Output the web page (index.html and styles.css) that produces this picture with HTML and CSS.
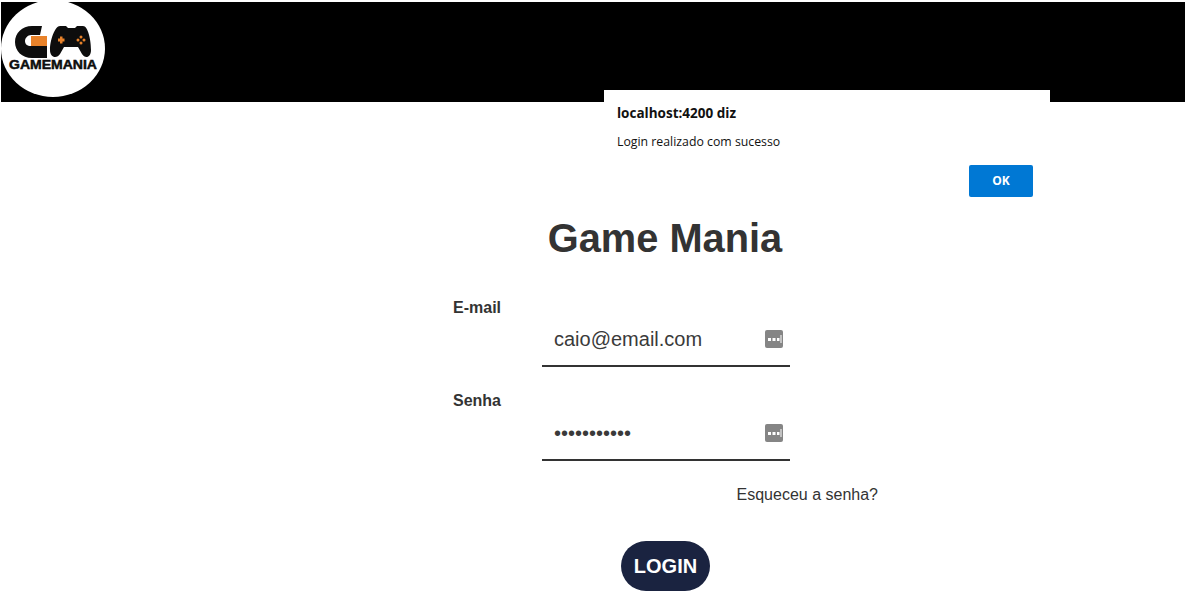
FILE: index.html
```html
<!DOCTYPE html>
<html lang="pt-BR">
<head>
  <meta charset="UTF-8" />
  <title>Game Mania</title>
  <link rel="stylesheet" href="styles.css">
</head>
<body>
  <header class="topo">
    <svg class="logo" viewBox="1 0 104 97" width="104" height="97">
      <ellipse cx="53" cy="48.5" rx="52" ry="48.5" fill="#fff" />
      <path d="M42 26H32C22 26 15 33 15 42C15 51 22 58 32 58H47V46H31C27 46 25 44 25 41C25 38 28 35 31 35H40Z" fill="#0d0d0d" />
      <path d="M31 36H47V46H31Z" fill="#e8822a" />
      <path d="M60 26H66L68 28H75L77 26H83C88 26 91 40 91 50C91 58 85 59 82 54L78 47H64L60 54C57 59 50 58 50 50C50 40 55 26 60 26Z" fill="#0d0d0d" />
      <path d="M58 38.500H60V36.500H62.500V38.500H64.500V41.500H62.500V43.500H60V41.500H58Z" fill="#e8822a" />
      <g fill="#e8822a">
        <circle cx="81" cy="37" r="1.500" />
        <circle cx="81" cy="43" r="1.500" />
        <circle cx="78" cy="40" r="1.500" />
        <circle cx="84" cy="40" r="1.500" />
      </g>
      <text class="logo-texto" x="9" y="69" textLength="88" lengthAdjust="spacingAndGlyphs">GAMEMANIA</text>
    </svg>
  </header>

  <div class="alerta">
    <strong class="alerta-titulo">localhost:4200 diz</strong>
    <p class="alerta-msg">Login realizado com sucesso</p>
    <div class="alerta-acoes">
      <button class="alerta-ok">OK</button>
    </div>
  </div>

  <main class="conteudo">
    <h1 class="titulo">Game Mania</h1>

    <form class="form-login">
      <label class="rotulo" for="email">E-mail</label>
      <div class="campo">
        <input id="email" type="text" value="caio@email.com" />
        <svg class="icone" viewBox="0 0 18 18" width="18" height="18">
          <rect width="18" height="18" rx="2" fill="#858585" />
          <path d="M3 8h3v3H3zM7.500 8h3v3h-3zM12 8h2.500v3H12z" fill="#fff" />
          <rect x="15.500" y="5" width="1" height="8" fill="#fff" />
        </svg>
      </div>

      <label class="rotulo rotulo-senha" for="senha">Senha</label>
      <div class="campo">
        <input id="senha" type="password" value="12345678901" />
        <svg class="icone" viewBox="0 0 18 18" width="18" height="18">
          <rect width="18" height="18" rx="2" fill="#858585" />
          <path d="M3 8h3v3H3zM7.500 8h3v3h-3zM12 8h2.500v3H12z" fill="#fff" />
          <rect x="15.500" y="5" width="1" height="8" fill="#fff" />
        </svg>
      </div>

      <a class="esqueceu" href="#">Esqueceu a senha?</a>
      <button class="btn-login" type="button">LOGIN</button>
    </form>
  </main>
</body>
</html>
```

FILE: styles.css
```css
body { margin: 0; font-family: "Liberation Sans", Arial, sans-serif; color: #333; background: #fff; }

.topo { display: flex; height: 100px; margin: 2px 0 0 1px; background: #000; }
.logo { display: block; margin-top: -2px; }
.logo-texto { font-size: 13px; font-weight: bold; fill: #0d0d0d; stroke: #0d0d0d; stroke-width: 0.5; }

/* Caixa de alerta do navegador */
.alerta {
  position: absolute; left: 604px; top: 90px;
  width: 446px; height: 123px; box-sizing: border-box;
  padding: 14px 17px 0 13px; background: #fff;
  font-family: "Open Sans", "Noto Sans", sans-serif; color: #111;
}
.alerta-titulo { display: block; font-size: 13.5px; line-height: 18px; }
.alerta-msg { margin: 11px 0 0; font-size: 12.3px; line-height: 17px; }
.alerta-acoes { display: flex; justify-content: flex-end; margin-top: 15px; }
.alerta-ok {
  width: 64px; height: 32px; padding: 0 0 2px; border: none; border-radius: 2px;
  background-color: #0078d4; color: white;
  font-family: inherit; font-size: 12px; font-weight: bold;
}

.conteudo { padding-top: 113px; }
.titulo { margin: 0 0 0 145px; font-size: 39.8px; line-height: 46px; text-align: center; color: #333; }

.form-login {
  display: grid; grid-template-columns: 48px 41px 248px 88px;
  margin: 37px 0 0 453px; width: 425px;
}
/* o rótulo ocupa a linha inteira, o campo fica na linha de baixo */
.rotulo {
  grid-column: 1 / -1; width: 48px; padding-top: 1px; margin-bottom: -1px;
  font-size: 16px; font-weight: bold; line-height: 18px; text-align: right; white-space: nowrap;
}
.rotulo-senha { margin: 24px 0 0; }
.campo {
  grid-column: 3; display: flex; align-items: center;
  height: 51px; padding: 0 7px 2px 12px; box-sizing: border-box;
  border-bottom: 2px solid #333;
}
.campo input {
  flex: 1; min-width: 0; padding: 0; border: none; outline: none; background: none;
  font-family: inherit; font-size: 20px; color: #3a3a3a;
}
.icone { flex: none; margin-bottom: 2px; }

.esqueceu {
  grid-column: 3 / 5; justify-self: end; margin-top: 25px;
  font-size: 16px; line-height: 18px; color: #333; text-decoration: none;
}
.btn-login {
  grid-column: 3; justify-self: center; width: 89px; height: 50px; margin: 37px 1px 0 0;
  border: none; border-radius: 25px; background-color: #1a2340; color: white;
  font-family: inherit; font-size: 20px; font-weight: bold; cursor: pointer;
}
```
